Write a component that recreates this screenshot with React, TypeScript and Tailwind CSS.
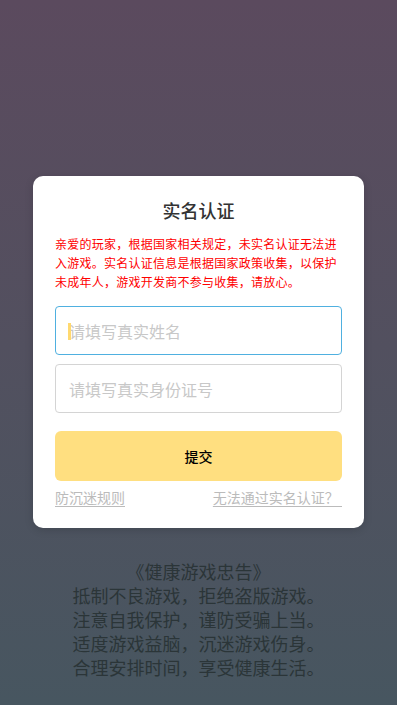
import React from 'react';

const FONT = '"Noto Sans CJK SC", "Noto Sans", sans-serif';

const advice = [
  '抵制不良游戏，拒绝盗版游戏。',
  '注意自我保护，谨防受骗上当。',
  '适度游戏益脑，沉迷游戏伤身。',
  '合理安排时间，享受健康生活。',
];

export default function App() {
  return (
    <div
      className="w-[397px] h-[705px] overflow-hidden bg-gradient-to-b from-[#5b4a5e] to-[#475660] flex flex-col items-center"
      style={{ fontFamily: FONT }}
    >
      {/* Card */}
      <div className="mt-[176px] w-[331px] bg-white rounded-[10px] shadow-[0_2px_8px_rgba(0,0,0,0.15)] px-[22px] pt-[23px] pb-[23px]">
        <h1 className="text-center text-[18px] leading-[22px] font-medium text-[#333]">实名认证</h1>

        <p className="mt-[13px] text-[12px] leading-[19px] tracking-[0.25px] text-[#ff0000]">
          亲爱的玩家，根据国家相关规定，未实名认证无法进入游戏。实名认证信息是根据国家政策收集，以保护未成年人，游戏开发商不参与收集，请放心。
        </p>

        {/* Name input (focused) */}
        <div className="relative mt-[15px] h-[49px] rounded-[4px] border border-[#4fb0e0]">
          <span className="absolute left-[12px] top-[16px] w-[3px] h-[17px] bg-[#ffd970]" />
          <input
            readOnly
            placeholder="请填写真实姓名"
            className="w-full h-full bg-transparent px-[13px] text-[16px] outline-none placeholder:text-[#c8c8c8]"
          />
        </div>

        {/* ID input */}
        <div className="mt-[9px] h-[49px] rounded-[4px] border border-[#d4d4d4]">
          <input
            readOnly
            placeholder="请填写真实身份证号"
            className="w-full h-full bg-transparent px-[13px] text-[16px] outline-none placeholder:text-[#c8c8c8]"
          />
        </div>

        <button className="mt-[18px] w-full h-[50px] rounded-[6px] bg-[#ffdf80] text-[14px] font-medium text-black">
          提交
        </button>

        <div className="mt-[8px] flex justify-between text-[14px] leading-[16px] text-[#bbbbbb]">
          <span className="underline underline-offset-[3px]">防沉迷规则</span>
          <span className="underline underline-offset-[3px] whitespace-pre">无法通过实名认证？ </span>
        </div>
      </div>

      {/* Advice */}
      <div className="mt-[31px] text-center text-[18px] leading-[24px] text-[#2b3538]">
        <p>《健康游戏忠告》</p>
        {advice.map((line) => (
          <p key={line}>{line}</p>
        ))}
      </div>
    </div>
  );
}
